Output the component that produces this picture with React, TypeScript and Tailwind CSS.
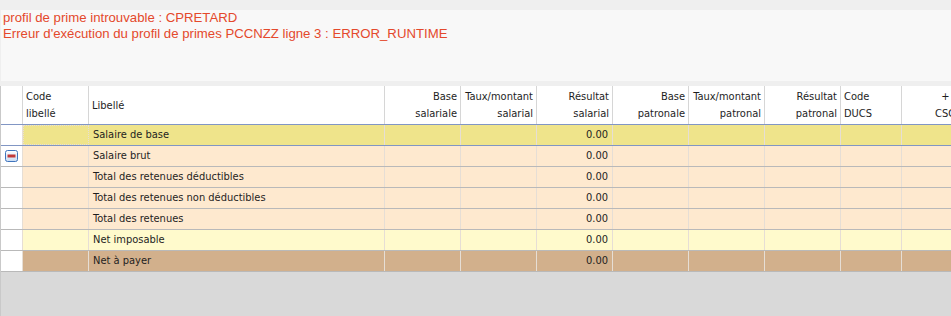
import React from "react";

const cols = [22, 66, 296, 76, 76, 76, 76, 76, 76, 61, 88];

type Row = { label: string; bg: string; val: string; minus?: boolean; selected?: boolean };

const rows: Row[] = [
  { label: "Salaire de base", bg: "bg-[#efe48b]", val: "0.00", selected: true },
  { label: "Salaire brut", bg: "bg-[#fee9cf]", val: "0.00", minus: true },
  { label: "Total des retenues déductibles", bg: "bg-[#fee9cf]", val: "0.00" },
  { label: "Total des retenues non déductibles", bg: "bg-[#fee9cf]", val: "0.00" },
  { label: "Total des retenues", bg: "bg-[#fee9cf]", val: "0.00" },
  { label: "Net imposable", bg: "bg-[#fffacc]", val: "0.00" },
  { label: "Net à payer", bg: "bg-[#d2b08c]", val: "0.00" },
];

const headers: { lines: string[]; align: "left" | "right" | "center" }[] = [
  { lines: [""], align: "left" },
  { lines: ["Code", "libellé"], align: "left" },
  { lines: ["Libellé"], align: "left" },
  { lines: ["Base", "salariale"], align: "right" },
  { lines: ["Taux/montant", "salarial"], align: "right" },
  { lines: ["Résultat", "salarial"], align: "right" },
  { lines: ["Base", "patronale"], align: "right" },
  { lines: ["Taux/montant", "patronal"], align: "right" },
  { lines: ["Résultat", "patronal"], align: "right" },
  { lines: ["Code", "DUCS"], align: "left" },
  { lines: ["+", "CSG"], align: "center" },
];

function MinusIcon() {
  return (
    <svg width="13" height="12" viewBox="0 0 13 12">
      <defs>
        <linearGradient id="mg" x1="0" y1="0" x2="0" y2="1">
          <stop offset="0" stopColor="#ffffff" />
          <stop offset="1" stopColor="#c9dcf3" />
        </linearGradient>
      </defs>
      <rect x="0.5" y="0.5" width="12" height="11" rx="2" fill="url(#mg)" stroke="#3f74bd" />
      <rect x="2.5" y="4.5" width="8" height="3" fill="#c23a3a" />
    </svg>
  );
}

export default function App() {
  const tahoma = { fontFamily: '"DejaVu Sans Condensed", "DejaVu Sans", sans-serif' };
  return (
    <div className="w-[951px] h-[316px] bg-[#efefef] overflow-hidden flex flex-col">
      <div className="h-[10px] shrink-0" />
      <div
        className="ml-[1px] h-[71px] shrink-0 bg-[#f8f8f8] pl-[2px] text-[13.2px] leading-[16px] text-[#e4492c]"
        style={{ fontFamily: '"Liberation Sans", Arial, sans-serif' }}
      >
        <div>profil de prime introuvable : CPRETARD</div>
        <div>Erreur d'exécution du profil de primes PCCNZZ ligne 3 : ERROR_RUNTIME</div>
      </div>
      <div className="h-[5px] shrink-0" />
      <div className="flex-1 flex flex-col bg-[#d9d9d9] border-l border-[#c9c9c9] overflow-hidden text-[11px] text-[#1e1e1e]" style={tahoma}>
        <div className="flex h-[39px] bg-white border-b border-[#8196c4] shrink-0">
          {headers.map((h, i) => (
            <div
              key={i}
              style={{ width: cols[i], minWidth: cols[i] }}
              className={
                "h-full border-r border-[#d6d6d6] flex flex-col justify-center leading-[17px] px-[3px] whitespace-nowrap overflow-hidden " +
                (h.align === "right" ? "items-end" : h.align === "center" ? "items-center" : "items-start")
              }
            >
              {h.lines.map((l, j) => (
                <div key={j}>{l}</div>
              ))}
            </div>
          ))}
        </div>
        {rows.map((r, ri) => (
          <div
            key={ri}
            className={
              "flex h-[21px] shrink-0 border-b " +
              (r.selected ? "border-[#8196c4] " : "border-[#b9b9b9] ") +
              r.bg
            }
          >
            {cols.map((w, ci) => {
              let content: React.ReactNode = null;
              let cls = "h-full border-r border-[#e6ded5] flex items-center whitespace-nowrap overflow-hidden ";
              if (ci === 0) {
                cls += "bg-white justify-center border-[#d6d6d6] ";
                if (r.minus) content = <MinusIcon />;
              } else if (ci === 1) {
                if (r.selected) cls += "border border-dotted border-[#555] ";
              } else if (ci === 2) {
                cls += "pl-[4px] ";
                content = r.label;
              } else if (ci === 5) {
                cls += "justify-end pr-[4px] ";
                content = r.val;
              }
              return (
                <div key={ci} style={{ width: w, minWidth: w }} className={cls}>
                  {content}
                </div>
              );
            })}
          </div>
        ))}
      </div>
    </div>
  );
}
